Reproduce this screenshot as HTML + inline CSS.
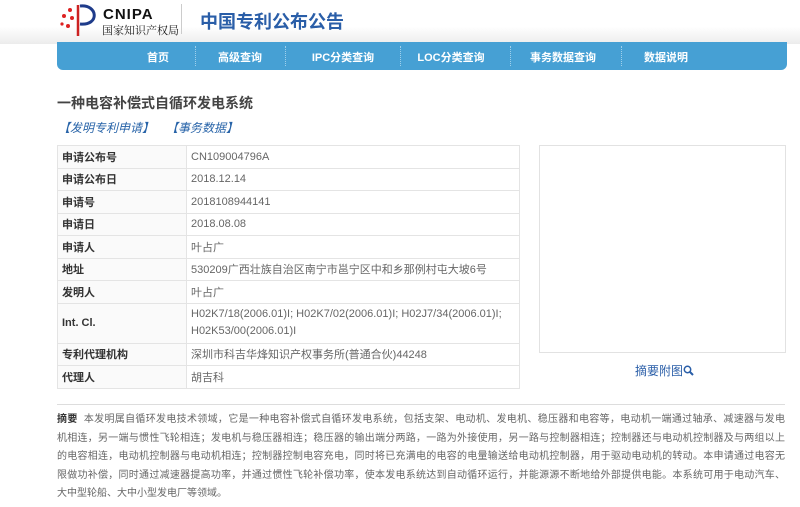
<!DOCTYPE html>
<html><head><meta charset="utf-8"><style>
*{margin:0;padding:0;box-sizing:border-box}
body{width:800px;height:507px;overflow:hidden;background:#fff;font-family:"Liberation Sans","Noto Sans CJK SC",sans-serif;color:#555;position:relative}
.hdr{position:absolute;left:0;top:0;width:800px;height:44px;background:linear-gradient(#fff 0%,#fff 60%,#ececec 100%)}
.nav{position:absolute;left:57px;top:42px;width:730px;height:28px;background:#46a0d4;border-radius:0 0 6px 6px}
.nav span{position:absolute;top:7px;color:#fff;font-size:11px;font-weight:bold;white-space:nowrap;transform:translateX(-50%)}
.nav i{position:absolute;top:4px;height:20px;border-left:1px dotted #9fd0ec}
.t{position:absolute;white-space:nowrap}
table{position:absolute;left:57px;top:145px;width:463px;border-collapse:collapse;font-size:11px}
td{border:1px solid #e4e4e4;padding:0 4px;height:22.5px;color:#666}
td.l{width:129px;font-weight:bold;color:#333;background:#fafafa}
.img{position:absolute;left:539px;top:145px;width:247px;height:208px;border:1px solid #e2e2e2}
.abs{position:absolute;left:57px;top:411px;width:728px;font-size:10px;line-height:18.6px;color:#666}
.abs div{white-space:nowrap;text-align:justify;text-align-last:justify;width:728px}
</style></head><body>
<div class="hdr"></div>
<svg style="position:absolute;left:58px;top:2px" width="44" height="36" viewBox="0 0 44 36">
<path d="M20 3 L20 34" stroke="#c22" stroke-width="2.5"/>
<path d="M22 4 C40 2 42 24 22 22" fill="none" stroke="#1e3b8a" stroke-width="3"/>
<g fill="#d22"><circle cx="12" cy="8" r="2"/><circle cx="6" cy="14" r="2"/><circle cx="14" cy="16" r="2"/><circle cx="4" cy="22" r="1.6"/><circle cx="10" cy="24" r="2"/></g>
</svg>
<div class="t" style="left:103px;top:6px;font-size:15px;font-weight:bold;color:#111;letter-spacing:1px">CNIPA</div>
<div class="t" style="left:102px;top:22px;font-size:11px;color:#222;font-family:'Noto Serif CJK SC',serif">国家知识产权局</div>
<div style="position:absolute;left:181px;top:4px;height:30px;border-left:1px solid #ccc"></div>
<div class="t" style="left:200px;top:8px;font-size:18px;font-weight:bold;color:#2a5ea8">中国专利公布公告</div>
<div class="nav">
<span style="left:101px">首页</span><i style="left:138px"></i>
<span style="left:183px">高级查询</span><i style="left:228px"></i>
<span style="left:286px">IPC分类查询</span><i style="left:343px"></i>
<span style="left:394px">LOC分类查询</span><i style="left:453px"></i>
<span style="left:506px">事务数据查询</span><i style="left:564px"></i>
<span style="left:609px">数据说明</span>
</div>
<div class="t" style="left:57px;top:93px;font-size:14px;font-weight:bold;color:#444">一种电容补偿式自循环发电系统</div>
<div class="t" style="left:58px;top:119px;font-size:12px;color:#2763a8;font-style:italic">【发明专利申请】</div>
<div class="t" style="left:166px;top:119px;font-size:12px;color:#2763a8;font-style:italic">【事务数据】</div>
<table>
<tr><td class="l">申请公布号</td><td>CN109004796A</td></tr>
<tr><td class="l">申请公布日</td><td>2018.12.14</td></tr>
<tr><td class="l">申请号</td><td>2018108944141</td></tr>
<tr><td class="l">申请日</td><td>2018.08.08</td></tr>
<tr><td class="l">申请人</td><td>叶占广</td></tr>
<tr><td class="l">地址</td><td>530209广西壮族自治区南宁市邕宁区中和乡那例村屯大坡6号</td></tr>
<tr><td class="l">发明人</td><td>叶占广</td></tr>
<tr><td class="l" style="height:40px">Int. Cl.</td><td style="line-height:17px">H02K7/18(2006.01)I; H02K7/02(2006.01)I; H02J7/34(2006.01)I;<br>H02K53/00(2006.01)I</td></tr>
<tr><td class="l">专利代理机构</td><td>深圳市科吉华烽知识产权事务所(普通合伙)44248</td></tr>
<tr><td class="l">代理人</td><td>胡吉科</td></tr>
</table>
<div class="img"></div>
<div class="t" style="left:635px;top:362px;font-size:12px;color:#2a5ea8">摘要附图<svg width="11" height="11" viewBox="0 0 11 11" style="vertical-align:-1px"><circle cx="4.5" cy="4.5" r="3.2" fill="none" stroke="#2a5ea8" stroke-width="1.5"/><path d="M7 7 L10 10" stroke="#2a5ea8" stroke-width="2"/></svg></div>
<div style="position:absolute;left:57px;top:404px;width:728px;border-top:1px solid #ddd"></div>
<div class="abs">
<div><b style="color:#333">摘要</b>&nbsp;&nbsp;本发明属自循环发电技术领域，它是一种电容补偿式自循环发电系统，包括支架、电动机、发电机、稳压器和电容等，电动机一端通过轴承、减速器与发电</div>
<div>机相连，另一端与惯性飞轮相连；发电机与稳压器相连；稳压器的输出端分两路，一路为外接使用，另一路与控制器相连；控制器还与电动机控制器及与两组以上</div>
<div>的电容相连，电动机控制器与电动机相连；控制器控制电容充电，同时将已充满电的电容的电量输送给电动机控制器，用于驱动电动机的转动。本申请通过电容无</div>
<div>限做功补偿，同时通过减速器提高功率，并通过惯性飞轮补偿功率，使本发电系统达到自动循环运行，并能源源不断地给外部提供电能。本系统可用于电动汽车、</div>
<div style="text-align-last:left">大中型轮船、大中小型发电厂等领域。</div>
</div>
</body></html>
